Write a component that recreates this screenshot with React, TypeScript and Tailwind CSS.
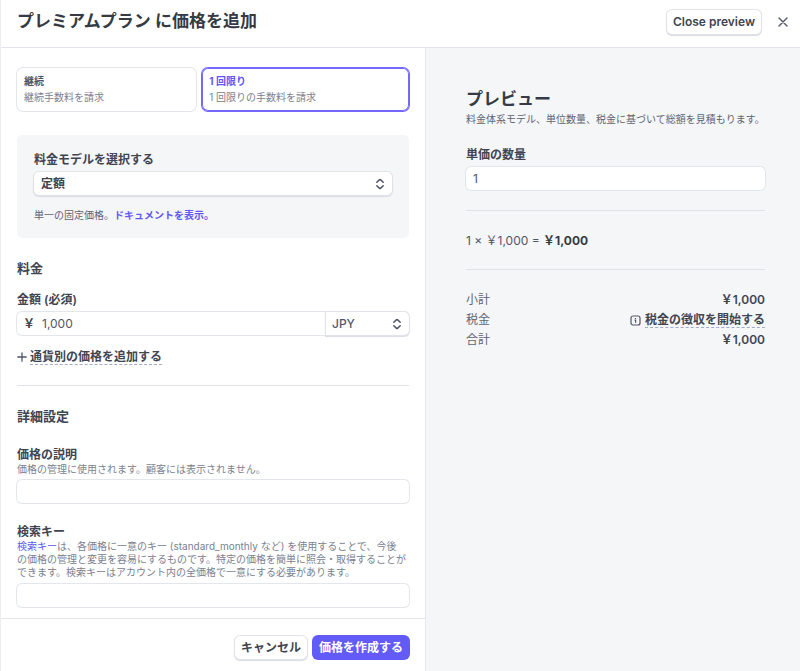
import React, { useState } from "react";

const outline = "shadow-[0_0_0_1px_#e3e6eb]";
const raised = "shadow-[0_0_0_1px_#e0e3e9,0_1px_1px_1px_#d9dce3]";

function UpDown() {
  return (
    <svg
      className="pointer-events-none absolute top-1/2 right-[7px] -translate-y-1/2"
      width="10"
      height="12"
      viewBox="0 0 10 12"
      fill="none"
      stroke="#50566a"
      strokeWidth="1.5"
      strokeLinecap="round"
      strokeLinejoin="round"
      aria-hidden="true"
    >
      <path d="M1.8 4.3 4.3 1.9q.7-.6 1.4 0l2.5 2.4" />
      <path d="M1.8 7.7 4.3 10.1q.7.6 1.4 0l2.5-2.4" />
    </svg>
  );
}

function PriceType(props: {
  title: string;
  note: string;
  selected: boolean;
  onSelect: () => void;
}) {
  const frame = props.selected
    ? "shadow-[0_0_0_1px_#7468fa,inset_0_0_0_1px_#7468fa]"
    : outline;
  return (
    <button
      type="button"
      aria-pressed={props.selected}
      onClick={props.onSelect}
      className={`rounded-md bg-white px-[7px] pt-[5px] pb-[6px] text-left text-[10px] leading-4 ${frame}`}
    >
      <span className={`block font-bold ${props.selected ? "text-[#6257f5]" : "text-[#50566a]"}`}>
        {props.title}
      </span>
      <span className="block text-[#7b8191]">{props.note}</span>
    </button>
  );
}

function PricePreview() {
  return (
    <aside className="border-l border-[#e6e8ee] bg-[#f5f6f8] pt-10 pr-[35px] pl-10">
      <h2 className="text-[17px] leading-[23px] font-semibold text-[#353a44]">プレビュー</h2>
      <p className="text-[10px] leading-4 text-[#5e6473]">
        料金体系モデル、単位数量、税金に基づいて総額を見積もります。
      </p>
      <label htmlFor="quantity" className="mt-5 block text-[12px] leading-4 font-semibold">
        単価の数量
      </label>
      <input
        id="quantity"
        defaultValue="1"
        className={`mt-1 block h-[23px] w-full rounded-[5px] bg-white px-[7px] text-[12px] text-[#50566a] outline-none ${outline}`}
      />
      <hr className="mt-5 border-[#e0e2ea]" />
      <p className="mt-5 text-[12px] leading-5 text-[#50566a]">
        1 × ￥1,000 = <strong className="font-bold text-[#353a44]">￥1,000</strong>
      </p>
      <hr className="mt-[18px] border-[#e0e2ea]" />
      <dl className="mt-5 grid grid-cols-[auto_1fr] text-[12px] leading-5 text-[#5e6473] [&>dd]:text-right [&>dd]:font-semibold [&>dd]:text-[#414552]">
        <dt>小計</dt>
        <dd>￥1,000</dd>
        <dt>税金</dt>
        <dd className="flex items-center justify-end gap-1">
          <svg width="11" height="11" viewBox="0 0 11 11" fill="none" stroke="#50566a" aria-hidden="true">
            <rect x="1" y="1" width="9" height="9" rx="2" strokeWidth="1.2" />
            <path d="M4.6 5.2h1v2.6M5.5 3v1" strokeWidth="1.2" />
          </svg>
          <a href="#tax" className="border-b border-dashed border-[#a3acc4] leading-[15px]">
            税金の徴収を開始する
          </a>
        </dd>
        <dt>合計</dt>
        <dd>￥1,000</dd>
      </dl>
    </aside>
  );
}

export default function App() {
  const [recurring, setRecurring] = useState(false);
  return (
    <div className="flex min-h-screen flex-col border-l border-[#ebedf1] bg-white font-[Inter,'Noto_Sans_CJK_JP',sans-serif] text-[#414552]">
      <header className="flex h-12 items-center border-b border-[#e3e6ec] pr-[11px] pb-[3px] pl-4">
        <h1 className="flex-1 text-[17px] font-semibold text-[#353a44]">プレミアムプラン に価格を追加</h1>
        <button type="button" className={`h-6 rounded-[5px] bg-white px-[6px] text-[12px] font-semibold ${raised}`}>
          Close preview
        </button>
        <button type="button" aria-label="閉じる" className="ml-4 p-px">
          <svg width="10" height="10" viewBox="0 0 10 10" fill="none" stroke="#50566a" strokeWidth="1.4" strokeLinecap="round">
            <path d="M1 1l8 8M9 1 1 9" />
          </svg>
        </button>
      </header>

      <div className="grid flex-1 grid-cols-[424fr_375fr]">
        <form className="flex flex-col" onSubmit={(e) => e.preventDefault()}>
          <div className="px-4 pt-5 pb-[11px]">
            <div className="grid grid-cols-[13fr_15fr] gap-[6px]">
              <PriceType
                title="継続"
                note="継続手数料を請求"
                selected={recurring}
                onSelect={() => setRecurring(true)}
              />
              <PriceType
                title="1 回限り"
                note="1 回限りの手数料を請求"
                selected={!recurring}
                onSelect={() => setRecurring(false)}
              />
            </div>

            <section className="mt-6 rounded-[5px] bg-[#f5f6f8] px-[17px] pt-[17px] pb-[15px]">
              <label htmlFor="model" className="block text-[12px] leading-4 font-semibold">
                料金モデルを選択する
              </label>
              <div className="relative mt-1">
                <select
                  id="model"
                  className={`block h-[23px] w-full appearance-none rounded-[5px] bg-white px-[7px] text-[12px] font-semibold outline-none ${raised}`}
                >
                  <option>定額</option>
                </select>
                <UpDown />
              </div>
              <p className="mt-3 text-[10px] leading-4 text-[#5e6473]">
                単一の固定価格。
                <a href="#docs" className="font-bold text-[#6257f5]">
                  ドキュメントを表示。
                </a>
              </p>
            </section>

            <h2 className="mt-5 text-[13px] leading-5 font-bold">料金</h2>
            <label htmlFor="amount" className="mt-[14px] block text-[12px] leading-4 font-semibold">
              金額 (必須)
            </label>
            <div className={`mt-1 flex h-[23px] items-center rounded-[5px] bg-white text-[12px] ${outline}`}>
              <span className="pl-[6px] font-semibold">￥</span>
              <input
                id="amount"
                defaultValue="1,000"
                className="h-[23px] min-w-0 flex-1 bg-transparent pl-[7px] text-[#50566a] outline-none"
              />
              <div className="relative w-[83px]">
                <select
                  aria-label="通貨"
                  className={`block h-[23px] w-full appearance-none rounded-r-[5px] bg-white px-[6px] text-[12px] font-medium text-[#50566a] outline-none ${raised}`}
                >
                  <option>JPY</option>
                </select>
                <UpDown />
              </div>
            </div>
            <button type="button" className="mt-[14px] flex h-4 items-center gap-[3px] text-[12px] font-semibold">
              <svg width="10" height="10" viewBox="0 0 10 10" stroke="#50566a" strokeWidth="1.3" strokeLinecap="round" aria-hidden="true">
                <path d="M5 .8v8.4M.8 5h8.4" />
              </svg>
              <span className="border-b border-dashed border-[#a3acc4] leading-[15px]">通貨別の価格を追加する</span>
            </button>

            <hr className="mt-5 border-[#e0e2e8]" />

            <h2 className="mt-5 text-[13px] leading-5 font-bold">詳細設定</h2>
            <label htmlFor="description" className="mt-[21px] block text-[12px] leading-4 font-semibold">
              価格の説明
            </label>
            <p className="text-[10px] leading-[13px] text-[#7b8191]">
              価格の管理に使用されます。顧客には表示されません。
            </p>
            <input
              id="description"
              className={`mt-1 block h-[23px] w-full rounded-[5px] bg-white px-[7px] text-[12px] outline-none ${outline}`}
            />
            <label htmlFor="lookup" className="mt-[21px] block text-[12px] leading-4 font-semibold">
              検索キー
            </label>
            <p className="text-[10px] leading-[13px] text-[#7b8191]">
              <a href="#lookup-keys" className="text-[#6257f5]">検索キー</a>
              は、各価格に一意のキー (standard_monthly など) を使用することで、今後
              <br />
              の価格の管理と変更を容易にするものです。特定の価格を簡単に照会・取得することができます。検索キーはアカウント内の全価格で一意にする必要があります。
            </p>
            <input
              id="lookup"
              className={`mt-[5px] block h-[23px] w-full rounded-[5px] bg-white px-[7px] text-[12px] outline-none ${outline}`}
            />
          </div>

          <footer className="mt-auto flex justify-end gap-[6px] border-t border-[#e3e6ec] px-4 pt-[17px] pb-3 text-[12px] font-semibold">
            <button type="button" className={`h-[23px] rounded-[5px] bg-white px-[6px] ${raised}`}>
              キャンセル
            </button>
            <button type="submit" className="h-[23px] rounded-[5px] bg-[#635bf7] px-[6px] text-white shadow-[0_0_0_1px_#635bf7]">
              価格を作成する
            </button>
          </footer>
        </form>
        <PricePreview />
      </div>
    </div>
  );
}
